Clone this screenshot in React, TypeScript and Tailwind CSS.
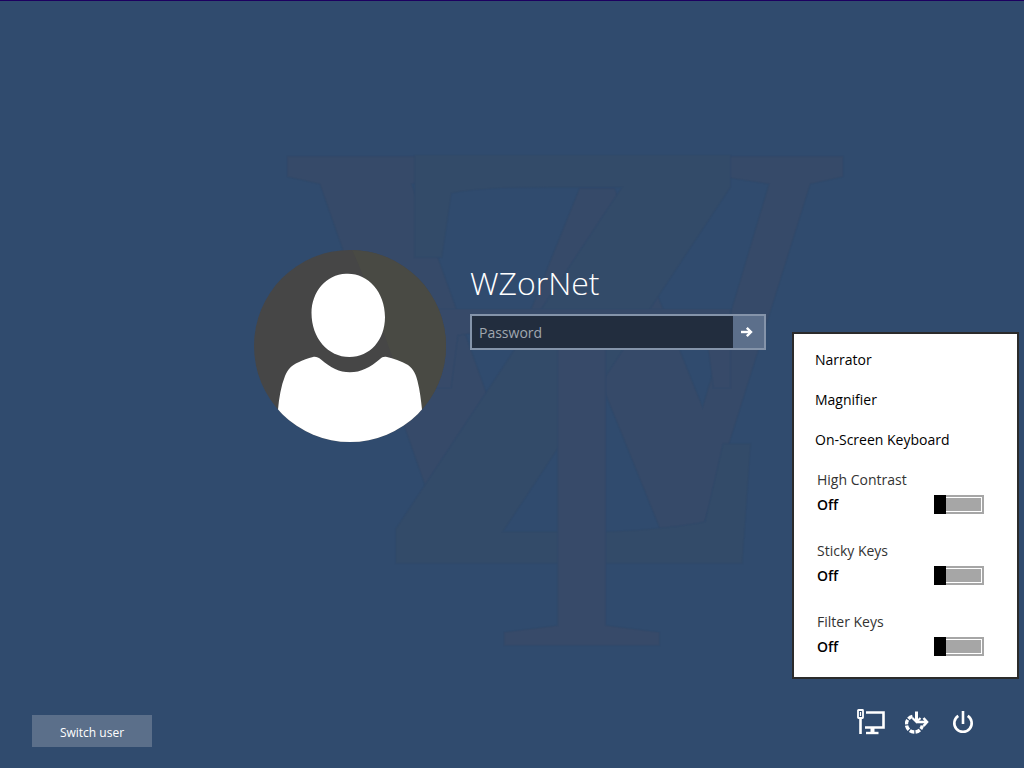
import React, { useState, FC } from "react";

interface AccessOption {
  id: string;
  label: string;
}

const tools = ["Narrator", "Magnifier", "On-Screen Keyboard"];

const options: AccessOption[] = [
  { id: "high-contrast", label: "High Contrast" },
  { id: "sticky-keys", label: "Sticky Keys" },
  { id: "filter-keys", label: "Filter Keys" },
];

// Monogram of three overlapping serif capitals behind the form
const Monogram: FC = () => (
  <svg
    aria-hidden="true"
    viewBox="0 0 1024 768"
    preserveAspectRatio="xMidYMid slice"
    className="pointer-events-none absolute inset-0 h-full w-full font-['Liberation_Serif',serif]"
  >
    <g strokeWidth="2" strokeOpacity="0.4">
      <text
        x="279"
        y="531"
        fontSize="573"
        fontWeight="700"
        fill="#364a69"
        stroke="#2f496a"
      >
        W
      </text>
      <text
        x="366"
        y="563"
        fontSize="624"
        fontWeight="700"
        fill="#334b69"
        stroke="#2f486a"
      >
        Z
      </text>
      <text x="425" y="645" fontSize="514" fill="#374a69" stroke="#2f486a">
        T
      </text>
    </g>
  </svg>
);

const Avatar: FC = () => (
  <svg
    viewBox="0 0 192 192"
    className="h-48 w-48 shrink-0"
    role="img"
    aria-label="User picture"
  >
    <clipPath id="avatar-clip">
      <circle cx="96" cy="96" r="96" />
    </clipPath>
    <g clipPath="url(#avatar-clip)">
      <rect width="192" height="192" fill="#464646" />
      <path d="M98 0 C112 28 132 92 158 160 H192 V0 Z" fill="#494a44" />
      <path
        d="M92 23.700 C113 22.500 131 41 131 67 C131 90 116 107 95.500 107 C74 107 57.500 88 57.500 63 C57.500 42 72 24.500 92 23.700 Z"
        fill="#fff"
      />
      <path
        d="M24 159.500 C25 148 27 136 31 126 C34 119 38 115 44 112.500 C49 110 54 108 59 107 C62 106.500 64.500 107.500 67 109.500 C77 118 85 122.300 96 122.300 C107 122.300 116 117.500 126 109 C128 107 130 106.500 133 107 C139 108.500 147 111 154 115 C160 119.500 162 125 163.500 131 C166 141 167 150 168 159.500 V192 H24 Z"
        fill="#fff"
      />
    </g>
  </svg>
);

const NetworkIcon: FC = () => (
  <svg width="28" height="26" viewBox="0 0 28 26" fill="none" stroke="#fff">
    <rect x="1" y="1" width="5" height="8" strokeWidth="1.800" rx="0.500" />
    <path d="M3.500 3 V7" strokeWidth="1.200" />
    <path d="M3.500 9.500 V25" strokeWidth="2.600" />
    <path d="M9 3.500 H26.500 V18.500 H8" strokeWidth="2.600" />
    <path d="M15.500 18.500 V23.500" strokeWidth="4" />
    <path d="M9 24 H21.500" strokeWidth="2.400" />
  </svg>
);

const EaseOfAccessIcon: FC = () => (
  <svg width="24" height="24" viewBox="0 0 24 24" fill="none" stroke="#fff">
    <path
      d="M7.500 6.300 A8 8 0 1 0 17.300 15.500"
      strokeWidth="3.400"
      strokeDasharray="4.800 1.200"
    />
    <path d="M11.500 1.500 V12" strokeWidth="3" />
    <path d="M7.500 8 L11.500 12 L15.500 8" strokeWidth="2.200" />
    <path d="M11.500 12 H22" strokeWidth="2.600" />
    <path d="M18.500 8 L22 12 L18.500 16" strokeWidth="2.600" />
  </svg>
);

const PowerIcon: FC = () => (
  <svg
    width="22"
    height="24"
    viewBox="0 0 22 24"
    fill="none"
    stroke="#fff"
    strokeWidth="2.600"
  >
    <path d="M6.300 5.800 A8.700 8.700 0 1 0 15.700 5.800" />
    <path d="M11 1 V14" />
  </svg>
);

const Toggle: FC<{
  option: AccessOption;
  checked: boolean;
  onChange: () => void;
}> = ({ option, checked, onChange }) => (
  <div>
    <label
      htmlFor={option.id}
      className="mb-0.5 block text-sm leading-5 text-[#333]"
    >
      {option.label}
    </label>
    <div className="flex h-6 items-center justify-between">
      <span className="pt-0.5 text-sm font-semibold text-black">
        {checked ? "On" : "Off"}
      </span>
      <input
        id={option.id}
        type="checkbox"
        role="switch"
        checked={checked}
        onChange={onChange}
        className="relative h-[19px] w-[50px] appearance-none border-2 border-[#a6a6a6] bg-[#a6a6a6] bg-clip-content p-px before:absolute before:-inset-y-0.5 before:-left-0.5 before:w-3 before:bg-black checked:before:-right-0.5 checked:before:left-auto"
      />
    </div>
  </div>
);

const AccessMenu: FC = () => {
  const [enabled, setEnabled] = useState<Set<string>>(new Set());

  const handleToggle = (id: string) => {
    setEnabled((prev) => {
      const next = new Set(prev);
      if (next.has(id)) {
        next.delete(id);
      } else {
        next.add(id);
      }
      return next;
    });
  };

  return (
    <div className="absolute right-[5px] bottom-[89px] w-[227px] border-2 border-[#2b2b2b] bg-white pt-1.5 pb-[19px]">
      {tools.map((tool) => (
        <button
          key={tool}
          type="button"
          className="block h-10 w-full px-[21px] text-left text-sm text-black hover:bg-gray-200"
        >
          {tool}
        </button>
      ))}
      <div className="mt-2.5 flex flex-col gap-[25px] pr-[33px] pl-[23px]">
        {options.map((option) => (
          <Toggle
            key={option.id}
            option={option}
            checked={enabled.has(option.id)}
            onChange={() => handleToggle(option.id)}
          />
        ))}
      </div>
    </div>
  );
};

const LoginForm: FC = () => {
  const [password, setPassword] = useState("");

  return (
    <form onSubmit={(e) => e.preventDefault()} className="w-[296px] pt-[13px]">
      <h1 className="mb-[11px] text-[32px] leading-10 font-light text-white">
        WZorNet
      </h1>
      <div className="flex h-9 border-2 border-[#8594aa]">
        <input
          type="password"
          aria-label="Password"
          placeholder="Password"
          value={password}
          onChange={(e) => setPassword(e.target.value)}
          className="min-w-0 flex-1 bg-[#222d3e] px-[7px] pt-0.5 text-sm text-white outline-none placeholder:text-[#a0a7b0]"
        />
        <button
          type="submit"
          aria-label="Submit"
          className="flex w-[31px] items-center justify-center bg-[#5c6f8b] pr-1"
        >
          <svg
            width="13"
            height="12"
            viewBox="0 0 13 12"
            fill="none"
            stroke="#fff"
            strokeWidth="2.400"
          >
            <path d="M1 6 H11" />
            <path d="M6.800 1.800 L11 6 L6.800 10.200" />
          </svg>
        </button>
      </div>
    </form>
  );
};

const App = () => {
  const [menuOpen, setMenuOpen] = useState(true);

  return (
    <div className="relative flex min-h-screen flex-col border-t border-[#1c0060] bg-[#304b6e] font-['Open_Sans',sans-serif]">
      <Monogram />
      <main className="relative flex flex-1 items-center justify-center pr-1">
        <div className="flex gap-6">
          <Avatar />
          <LoginForm />
        </div>
      </main>
      <footer className="relative flex items-end justify-between pt-1.5 pr-[38px] pb-[21px] pl-8">
        <button
          type="button"
          className="h-8 w-[120px] bg-[#5b6f8a] pt-1 text-xs text-white"
        >
          Switch user
        </button>
        <nav className="flex h-[50px] items-center">
          <button
            type="button"
            aria-label="Network"
            className="flex w-[46px] justify-center"
          >
            <NetworkIcon />
          </button>
          <button
            type="button"
            aria-label="Ease of access"
            aria-expanded={menuOpen}
            onClick={() => setMenuOpen(!menuOpen)}
            className="flex w-[46px] justify-center"
          >
            <EaseOfAccessIcon />
          </button>
          <button
            type="button"
            aria-label="Power"
            className="flex w-[46px] justify-center"
          >
            <PowerIcon />
          </button>
        </nav>
      </footer>
      {menuOpen && <AccessMenu />}
    </div>
  );
};

export default App;
